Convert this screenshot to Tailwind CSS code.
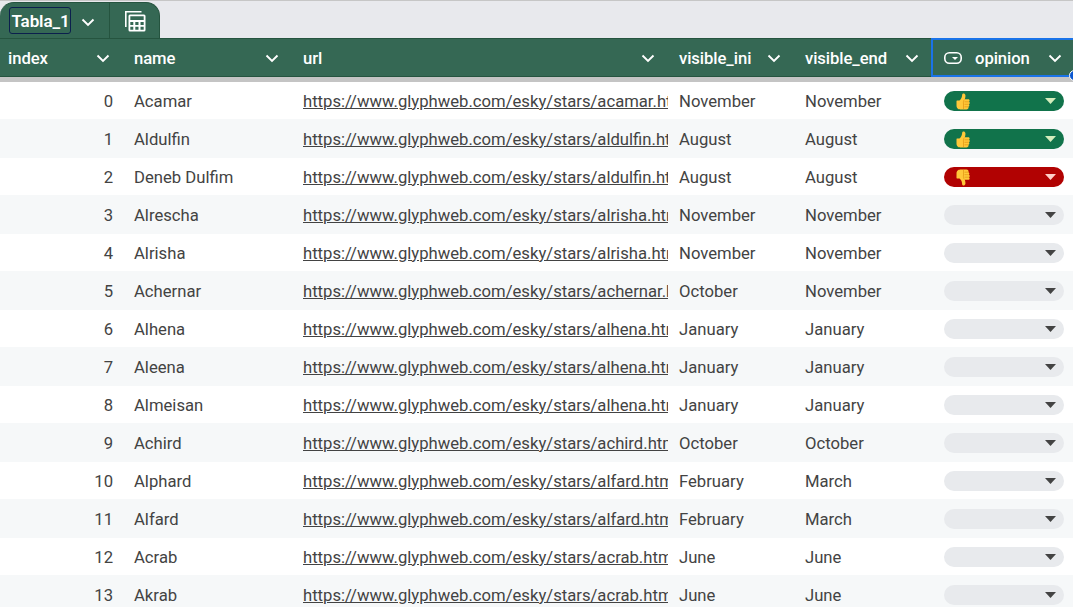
<!DOCTYPE html>
<html lang="es">
<head>
<meta charset="utf-8">
<title>Tabla_1</title>
<script src="https://cdn.jsdelivr.net/npm/@tailwindcss/browser@4"></script>
</head>
<body class="w-[1073px] h-[607px] overflow-hidden bg-white font-['Roboto',sans-serif] text-[16.67px] text-[#434343]">
<svg class="hidden">
  <symbol id="chev" viewBox="0 0 14 9"><path d="M1.500 1.500 7 7l5.500-5.500" fill="none" stroke="#fff" stroke-width="1.900"/></symbol>
  <symbol id="up" viewBox="0 0 14 17">
    <path d="M1 7.500H3.500C5.500 6 6 4 6.200 1.600 6.400 0 9.100 0 9.400 2.200 9.600 3.700 9.200 5 8.800 6.300H12.300C13.900 6.300 13.900 8.300 13 8.700 14.100 9.200 14 10.900 12.900 11.300 13.700 12 13.400 13.500 12.400 13.800 12.900 15.200 12.100 16.500 10.500 16.500H5C3 16.500.5 15.900.5 12.500V9Q.4 7.500 1 7.500Z" fill="#ffc83a"/>
    <path d="M12.900 8.800H8.500M12.800 11.300H8.500M12.300 13.800H8.500M8.300 6.600C7.300 8 7.300 9.500 7.500 11V16" fill="none" stroke="#e59a16" stroke-width=".8"/>
  </symbol>
</svg>
<div class="flex h-[38px] border-t border-[#c6c6c6] bg-[#e8e9ed] pt-px">
  <div class="flex h-9 w-40 rounded-t-[14px] border-t border-r border-[#25543f] bg-[#356854]">
    <div class="flex w-[110px] items-center border-r border-[#25543f] pl-[9px]">
      <span class="flex h-[27px] w-[62px] items-center justify-center rounded-[3px] border border-[#0b1f4d] pt-0.5 pl-px text-[17px] font-semibold tracking-[-0.1px] text-white">Tabla_1</span>
      <svg class="mt-[3px] ml-[10px] h-[9px] w-[14px]"><use href="#chev"/></svg>
    </div>
    <div class="flex flex-1 items-center pl-[14px]">
      <svg class="mt-px h-[22px] w-[22px]" viewBox="0 0 22 22"><path d="M1.800 17V1.800H17.500" fill="none" stroke="#fff" stroke-width="1.600"/><path fill="#fff" fill-rule="evenodd" d="M6 4.500H20Q21.500 4.500 21.500 6V20Q21.500 21.500 20 21.500H6Q4.500 21.500 4.500 20V6Q4.500 4.500 6 4.500ZM6.300 6.200V10H19.700V6.200ZM6.300 11.900V15H9.300V11.900ZM11.300 11.900V15H14.500V11.900ZM16.500 11.900V15H19.700V11.900ZM6.300 16.700V19.700H9.300V16.700ZM11.300 16.700V19.700H14.500V16.700ZM16.500 16.700V19.700H19.700V16.700Z"/></svg>
    </div>
  </div>
</div>
<div class="flex h-[39px] border-y border-[#25543f] bg-[#356854] font-medium tracking-[-0.07px] text-white">
  <div class="flex w-[126px] items-center justify-between pt-0.5 pr-4 pl-2">index<svg class="h-[9px] w-[14px]"><use href="#chev"/></svg></div>
  <div class="flex w-[169px] items-center justify-between pt-0.5 pr-4 pl-2">name<svg class="h-[9px] w-[14px]"><use href="#chev"/></svg></div>
  <div class="flex w-[376px] items-center justify-between pt-0.5 pr-4 pl-2">url<svg class="h-[9px] w-[14px]"><use href="#chev"/></svg></div>
  <div class="flex w-[126px] items-center justify-between pt-0.5 pr-4 pl-2">visible_ini<svg class="h-[9px] w-[14px]"><use href="#chev"/></svg></div>
  <div class="flex w-[134px] items-center justify-between pt-0.5 pr-3 pl-2">visible_end<svg class="h-[9px] w-[14px]"><use href="#chev"/></svg></div>
  <div class="relative -my-px flex h-[39px] w-[142px] shrink-0 items-center border-2 border-r-0 border-[#1a73e8] pt-0.5 pl-[11px]">
    <svg class="-mt-0.5 h-3 w-[18px]" viewBox="0 0 18 12"><rect x=".8" y=".8" width="16.400" height="10.400" rx="4.500" fill="none" stroke="#fff" stroke-width="1.600"/><path d="M8 5h6l-3 3z" fill="#fff"/></svg>
    <span class="ml-[13px] w-[73px]">opinion</span>
    <svg class="h-[9px] w-[14px]"><use href="#chev"/></svg>
    <span class="absolute -right-[7px] -bottom-[6px] size-[11px] rounded-full border border-white bg-[#0b57d0]"></span>
  </div>
</div>
<div class="h-[5px] bg-[#c4c4c4]"></div>
<div id="rows" class="-mt-px"></div>
<script>
const data = [
 ['Acamar','acamar.html','November','November','up'],
 ['Aldulfin','aldulfin.html','August','August','up'],
 ['Deneb Dulfim','aldulfin.html','August','August','down'],
 ['Alrescha','alrisha.html','November','November'],
 ['Alrisha','alrisha.html','November','November'],
 ['Achernar','achernar.html','October','November'],
 ['Alhena','alhena.html','January','January'],
 ['Aleena','alhena.html','January','January'],
 ['Almeisan','alhena.html','January','January'],
 ['Achird','achird.html','October','October'],
 ['Alphard','alfard.html','February','March'],
 ['Alfard','alfard.html','February','March'],
 ['Acrab','acrab.html','June','June'],
 ['Akrab','acrab.html','June','June'],
];
const pills = {
  up: ['bg-[#11734b]', '#d4edbc', '<svg class="mt-px h-[17px] w-[14px]"><use href="#up"/></svg>'],
  down: ['bg-[#b10202]', '#ffcfc9', '<svg class="h-[17px] w-[14px] -scale-y-100"><use href="#up"/></svg>'],
  none: ['bg-[#e8eaed]', '#434343', '<span></span>'],
};
document.getElementById('rows').innerHTML = data.map(([name, page, ini, end, vote], i) => {
  const [bg, arrow, icon] = pills[vote || 'none'];
  return `<div class="flex h-[38px] items-center pt-0.5 ${i % 2 ? 'bg-[#f6f8f9] shadow-[0_1px_0_#f6f8f9]' : 'bg-transparent'}">
    <div class="w-[126px] pr-[13px] text-right">${i}</div>
    <div class="w-[169px] pl-2">${name}</div>
    <div class="w-[373px] overflow-hidden pl-2 whitespace-nowrap"><span class="underline">https://www.glyphweb.com/esky/stars/${page}</span></div>
    <div class="w-[129px] pl-[11px]">${ini}</div>
    <div class="w-[134px] pl-2">${end}</div>
    <div class="ml-[13px] flex h-5 w-[120px] shrink-0 items-center justify-between rounded-full pr-2 pl-3 ${bg}">${icon}<svg class="h-[6px] w-[11px]" viewBox="0 0 11 6"><path d="M0 0h11L5.500 6z" fill="${arrow}"/></svg></div>
  </div>`;
}).join('');
</script>
</body>
</html>
